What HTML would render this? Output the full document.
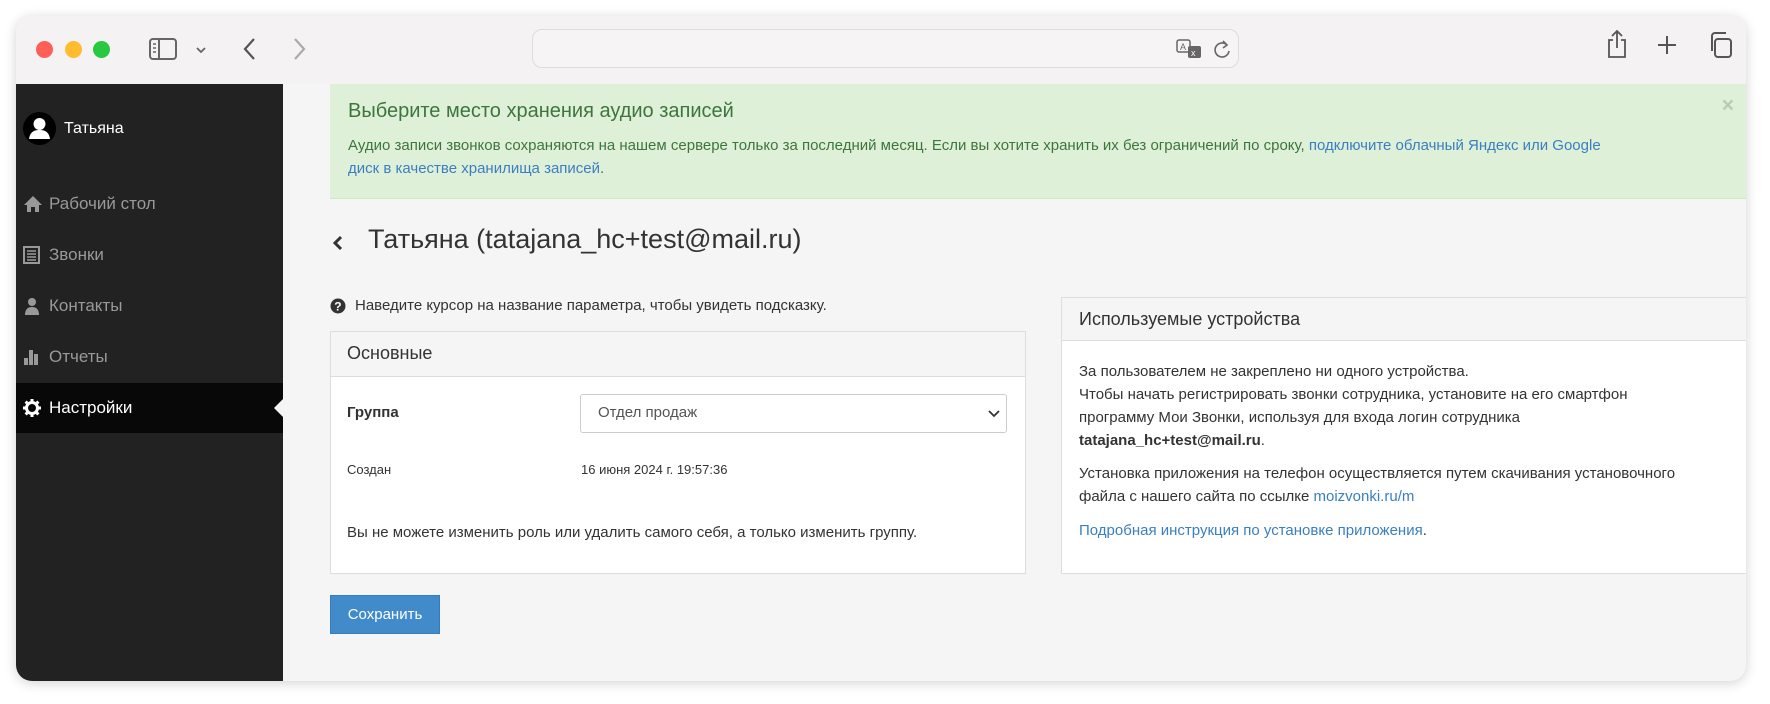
<!DOCTYPE html>
<html><head><meta charset="utf-8"><style>
*{box-sizing:border-box;margin:0;padding:0}
body{width:1770px;height:704px;background:#fff;font-family:"Liberation Sans",Arial,sans-serif;position:relative;overflow:hidden}
.win{position:absolute;left:16px;top:16px;width:1730px;height:665px;border-radius:16px;overflow:hidden;background:#f5f5f5;box-shadow:0 2px 12px rgba(0,0,0,.18)}
.tb{position:absolute;left:0;top:0;width:100%;height:68px;background:#f4f2f3}
.dot{position:absolute;top:25px;width:17px;height:17px;border-radius:50%}
.abs{position:absolute}
.side{position:absolute;left:0;top:68px;width:267px;height:597px;background:#222}
.mi{position:absolute;left:7px;color:#999;font-size:17px;height:20px;line-height:20px}
.mi svg{position:absolute;left:0;top:1px}
.mi span{position:absolute;left:26px;white-space:nowrap}
.alert{position:absolute;left:314px;top:68px;right:0;height:115px;background:#dff0d8;border-bottom:1px solid #d0e6c6;color:#3c763d}
a{color:#3a7fc1;text-decoration:none}
.panel{position:absolute;background:#fff;border:1px solid #ddd}
.ph{background:#f5f5f5;border-bottom:1px solid #ddd;color:#333}
</style></head><body>
<div class="win">
 <div class="tb">
  <div class="dot" style="left:20px;background:#fe5f57"></div>
  <div class="dot" style="left:49px;background:#febc2e"></div>
  <div class="dot" style="left:77px;background:#28c840"></div>
  <svg class="abs" style="left:133px;top:22px" width="28" height="22" viewBox="0 0 28 22"><rect x="1" y="1" width="26" height="20" rx="3" fill="none" stroke="#666" stroke-width="2"/><line x1="10" y1="1" x2="10" y2="21" stroke="#666" stroke-width="2"/><path d="M4 6h3M4 10h3M4 14h3" stroke="#666" stroke-width="1.5"/></svg>
  <svg class="abs" style="left:179px;top:30px" width="12" height="8"><path d="M2 2l4 4 4-4" fill="none" stroke="#666" stroke-width="1.8"/></svg>
  <svg class="abs" style="left:226px;top:21px" width="14" height="24"><path d="M12 2L3 12l9 10" fill="none" stroke="#555" stroke-width="2.2"/></svg>
  <svg class="abs" style="left:277px;top:21px" width="14" height="24"><path d="M2 2l9 10-9 10" fill="none" stroke="#aaa" stroke-width="2.2"/></svg>
  <div class="abs" style="left:516px;top:13px;width:707px;height:39px;border:1px solid #ddd;border-radius:10px;background:#f6f4f5"></div>
  <svg class="abs" style="left:1160px;top:22px" width="28" height="24"><rect x="1" y="2" width="13" height="12" rx="2" fill="none" stroke="#666" stroke-width="1.5"/><text x="4" y="12" font-size="9" fill="#666" font-family="Liberation Sans">A</text><rect x="12" y="8" width="13" height="12" rx="2" fill="#666"/><text x="15" y="18" font-size="9" fill="#fff" font-family="Liberation Sans">x</text></svg>
  <svg class="abs" style="left:1196px;top:23px" width="20" height="22"><path d="M15 6a7 7 0 1 0 2 6" fill="none" stroke="#666" stroke-width="1.6"/><path d="M11 2l4 4-4 3" fill="none" stroke="#666" stroke-width="1.6"/></svg>
  <svg class="abs" style="left:1590px;top:13px" width="22" height="30"><path d="M7 11H3v17h16V11h-4M11 2v17M6 7l5-5 5 5" fill="none" stroke="#555" stroke-width="1.8"/></svg>
  <svg class="abs" style="left:1640px;top:18px" width="22" height="22"><path d="M11 2v18M2 11h18" stroke="#555" stroke-width="2"/></svg>
  <svg class="abs" style="left:1692px;top:15px" width="26" height="28"><rect x="7" y="8" width="16" height="18" rx="3" fill="none" stroke="#555" stroke-width="2"/><path d="M4 20V5a3 3 0 0 1 3-3h11" fill="none" stroke="#555" stroke-width="2"/></svg>
 </div>
 <div class="side">
  <div class="abs" style="left:7px;top:28px;width:33px;height:33px;border-radius:50%;background:#000"><svg width="33" height="33"><circle cx="16.5" cy="12" r="6" fill="#fff"/><path d="M6 27c1-7 5-9 10.5-9s9.5 2 10.5 9z" fill="#fff"/></svg></div>
  <div class="abs" style="left:48px;top:36px;color:#fff;font-size:16px">Татьяна</div>
  <div class="mi" style="top:110px"><svg width="20" height="18"><path d="M10 1L1 10h3v7h4v-5h4v5h4v-7h3z" fill="#999"/></svg><span>Рабочий стол</span></div>
  <div class="mi" style="top:161px"><svg width="18" height="18"><rect x="1" y="1" width="15" height="16" fill="none" stroke="#999" stroke-width="2"/><path d="M4 5h9M4 8h9M4 11h9M4 14h9" stroke="#999" stroke-width="1.4"/></svg><span>Звонки</span></div>
  <div class="mi" style="top:212px"><svg width="18" height="18"><circle cx="9" cy="5" r="4" fill="#999"/><path d="M2 18c0-6 3-8 7-8s7 2 7 8z" fill="#999"/></svg><span>Контакты</span></div>
  <div class="mi" style="top:263px"><svg width="18" height="18"><rect x="1" y="10" width="4" height="7" fill="#999"/><rect x="6" y="2" width="4" height="15" fill="#999"/><rect x="11" y="6" width="4" height="11" fill="#999"/></svg><span>Отчеты</span></div>
  <div class="abs" style="left:0;top:299px;width:267px;height:50px;background:#080808"></div>
  <div class="mi" style="top:314px;color:#fff"><svg width="18" height="18"><circle cx="9" cy="9" r="5.5" fill="none" stroke="#fff" stroke-width="3"/><path d="M9 0v4M9 14v4M0 9h4M14 9h4M2.6 2.6l3 3M12.4 12.4l3 3M15.4 2.6l-3 3M5.6 12.4l-3 3" stroke="#fff" stroke-width="3"/></svg><span>Настройки</span></div>
  <div class="abs" style="left:258px;top:315px;width:0;height:0;border-top:9px solid transparent;border-bottom:9px solid transparent;border-right:9px solid #f5f5f5"></div>
 </div>
 <div class="alert">
  <div class="abs" style="left:18px;top:16px;font-size:20px">Выберите место хранения аудио записей</div>
  <div class="abs" style="left:18px;top:50px;font-size:15px;line-height:23px;width:1400px">Аудио записи звонков сохраняются на нашем сервере только за последний месяц. Если вы хотите хранить их без ограничений по сроку, <a>подключите облачный Яндекс или Google<br>диск в качестве хранилища записей</a>.</div>
  <div class="abs" style="right:12px;top:10px;font-size:21px;color:#b8ccb2;font-weight:bold">×</div>
 </div>
 <svg class="abs" style="left:316px;top:219px" width="12" height="16"><path d="M9 2L3 8l6 6" fill="none" stroke="#333" stroke-width="3"/></svg>
 <div class="abs" style="left:352px;top:208px;font-size:27px;color:#333">Татьяна (tatajana_hc+test@mail.ru)</div>
 <svg class="abs" style="left:314px;top:282px" width="16" height="16"><circle cx="8" cy="8" r="7.5" fill="#333"/><text x="4.3" y="12.5" font-size="12" font-weight="bold" fill="#fff" font-family="Liberation Sans">?</text></svg>
 <div class="abs" style="left:339px;top:281px;font-size:15px;color:#333">Наведите курсор на название параметра, чтобы увидеть подсказку.</div>
 <div class="panel" style="left:314px;top:315px;width:696px;height:243px">
  <div class="ph" style="height:45px;padding:11px 16px;font-size:18px">Основные</div>
  <div class="abs" style="left:16px;top:72px;font-size:15px;font-weight:bold;color:#333">Группа</div>
  <div class="abs" style="left:249px;top:62px;width:427px;height:39px;border:1px solid #ccc;border-radius:3px;padding:9px 17px;font-size:15px;color:#555">Отдел продаж<svg class="abs" style="right:6px;top:15px" width="12" height="8"><path d="M1 1l5 5 5-5" fill="none" stroke="#333" stroke-width="1.8"/></svg></div>
  <div class="abs" style="left:16px;top:130px;font-size:13px;color:#333">Создан</div>
  <div class="abs" style="left:250px;top:130px;font-size:13px;color:#333">16 июня 2024 г. 19:57:36</div>
  <div class="abs" style="left:16px;top:192px;font-size:15px;color:#333">Вы не можете изменить роль или удалить самого себя, а только изменить группу.</div>
 </div>
 <div class="panel" style="left:1045px;top:281px;width:700px;height:277px">
  <div class="ph" style="height:43px;padding:11px 17px;font-size:18px">Используемые устройства</div>
  <div class="abs" style="left:17px;top:62px;font-size:15px;line-height:23px;color:#333;width:600px">За пользователем не закреплено ни одного устройства.<br>Чтобы начать регистрировать звонки сотрудника, установите на его смартфон программу Мои Звонки, используя для входа логин сотрудника <b>tatajana_hc+test@mail.ru</b>.</div>
  <div class="abs" style="left:17px;top:164px;font-size:15px;line-height:23px;color:#333;width:600px">Установка приложения на телефон осуществляется путем скачивания установочного файла с нашего сайта по ссылке <a>moizvonki.ru/m</a></div>
  <div class="abs" style="left:17px;top:224px;font-size:15px;color:#333"><a>Подробная инструкция по установке приложения</a>.</div>
 </div>
 <div class="abs" style="left:314px;top:579px;width:110px;height:39px;background:#428bca;border:1px solid #357ebd;color:#fff;font-size:15px;text-align:center;line-height:37px">Сохранить</div>
</div>
</body></html>
